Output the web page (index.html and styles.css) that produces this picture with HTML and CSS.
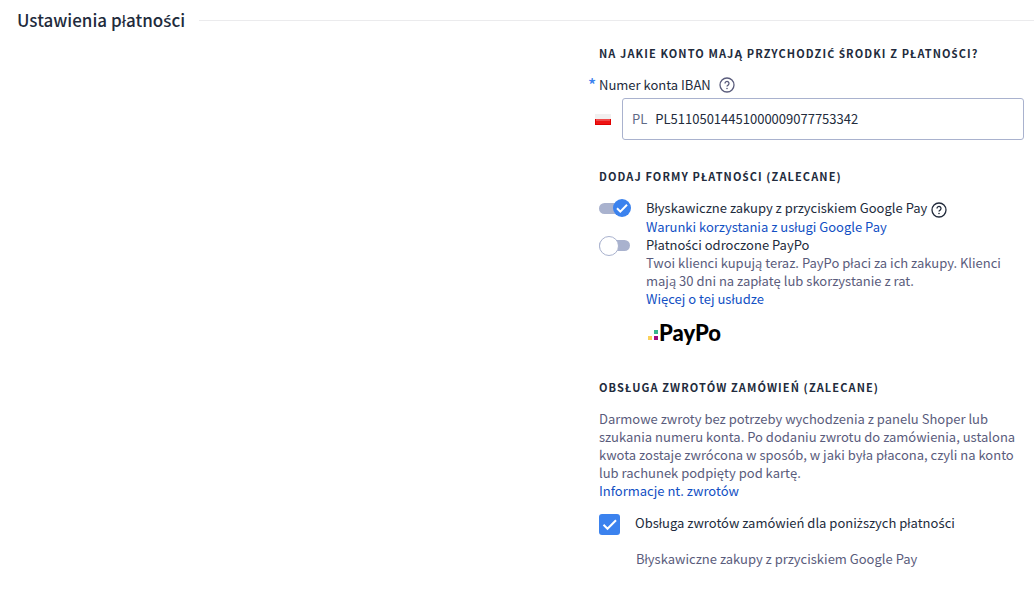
FILE: index.html
```html
<!DOCTYPE html>
<html lang="pl">
<head>
<meta charset="utf-8">
<title>Ustawienia płatności</title>
<link rel="stylesheet" href="styles.css">
</head>
<body>
<header class="section-head">
  <h1 class="section-title">Ustawienia płatno<span class="accent">ś</span>ci</h1>
  <div class="section-rule"></div>
</header>
<main class="settings">
  <form class="panel">
    <section class="group group-account">
      <h2 class="group-title">Na jakie konto mają przychodzi<span class="accent">ć</span> <span class="accent">ś</span>rodki z płatno<span class="accent">ś</span>ci?</h2>
      <div class="field-label">
        <span class="required">*</span>
        <label for="iban">Numer konta IBAN</label>
        <button class="help" type="button" aria-label="Pomoc">
          <svg class="help-icon" viewBox="0 0 16 16"><circle cx="8" cy="8" r="7"/><path d="M6 6.500a2 2 0 1 1 3.100 1.600C8.300 8.600 8 8.900 8 9.600"/><circle class="dot" cx="8" cy="11.500" r=".8"/></svg>
        </button>
      </div>
      <div class="field">
        <svg class="flag" viewBox="0 0 16 11"><rect width="16" height="5" fill="#f1f0f0"/><rect y="5" width="16" height="6" fill="#e00000"/><rect x="1" y="5" width="14" height="2" fill="#f04a4a"/><rect x="1" y="7" width="14" height="3" fill="#ee1414"/></svg>
        <div class="input-box">
          <span class="prefix">PL</span>
          <input class="input" id="iban" type="text" value="PL51105014451000009077753342">
        </div>
      </div>
    </section>
    <section class="group group-methods">
      <h2 class="group-title">Dodaj formy płatno<span class="accent">ś</span>ci (zalecane)</h2>
      <div class="method">
        <input class="toggle" id="gpay" type="checkbox" checked>
        <div class="method-text">
          <div class="method-name">
            <label for="gpay">Błyskawiczne zakupy z przyciskiem Google Pay</label>
            <button class="help help-dark" type="button" aria-label="Pomoc">
              <svg class="help-icon" viewBox="0 0 16 16"><circle cx="8" cy="8" r="7"/><path d="M6 6.500a2 2 0 1 1 3.100 1.600C8.300 8.600 8 8.900 8 9.600"/><circle class="dot" cx="8" cy="11.500" r=".8"/></svg>
            </button>
          </div>
          <a class="link" href="#">Warunki korzystania z usługi Google Pay</a>
        </div>
      </div>
      <div class="method">
        <input class="toggle" id="paypo" type="checkbox">
        <div class="method-text">
          <label for="paypo">Płatno<span class="accent">ś</span>ci odroczone PayPo</label>
          <p class="muted">Twoi klienci kupują teraz. PayPo płaci za ich zakupy. Klienci mają 30 dni na zapłatę lub skorzystanie z rat.</p>
          <a class="link" href="#">Więcej o tej usłudze</a>
          <div class="paypo">
            <svg class="paypo-mark" viewBox="0 0 10 10"><rect y="6" width="4" height="4" fill="#fbd15b"/><rect x="6" width="4" height="4" fill="#35b58c"/><rect x="6" y="6" width="4" height="4" fill="#a30b80"/></svg>
            <span class="paypo-name">PayPo</span>
          </div>
        </div>
      </div>
    </section>
    <section class="group">
      <h2 class="group-title">Obsługa zwrotów zamówień (zalecane)</h2>
      <p class="muted">Darmowe zwroty bez potrzeby wychodzenia z panelu Shoper lub szukania numeru konta. Po dodaniu zwrotu do zamówienia, ustalona kwota zostaje zwrócona w sposób, w jaki była płacona, czyli na konto lub rachunek podpięty pod kartę.</p>
      <a class="link" href="#">Informacje nt. zwrotów</a>
      <div class="check-row">
        <input class="check" id="returns" type="checkbox" checked>
        <label for="returns">Obsługa zwrotów zamówień dla poni<span class="accent">ż</span>szych płatno<span class="accent">ś</span>ci</label>
      </div>
      <p class="muted sub-item">Błyskawiczne zakupy z przyciskiem Google Pay</p>
    </section>
  </form>
</main>
</body>
</html>
```

FILE: styles.css
```css
* { box-sizing: border-box; }

body {
  margin: 0;
  background: #fff;
  color: #222b3c;
  font-family: "Noto Sans CJK SC", "Open Sans", sans-serif;
  font-size: 13px;
  line-height: 18px;
}

h1, h2, p { margin: 0; }

.accent {
  font-family: "Noto Sans", sans-serif;
  line-height: 1;
}

.section-head {
  display: flex;
  align-items: center;
  gap: 14px;
  padding: 8px 0 8px 17px;
}

.section-title {
  font-size: 17px;
  line-height: 24px;
  font-weight: 500;
}

.section-rule {
  flex: 1;
  height: 1px;
  background: #ebebed;
}

.settings {
  display: grid;
  grid-template-columns: 588fr 436fr;
  padding: 4px 10px 20px 0;
}

.panel { grid-column: 2; }

.group { padding-left: 11px; }
.group-account { padding-bottom: 27px; }
.group-methods { padding-bottom: 33px; }

.group-title {
  margin-bottom: 14px;
  font-size: 11px;
  line-height: 18px;
  font-weight: 700;
  letter-spacing: 0.1em;
  text-transform: uppercase;
}

.field-label {
  display: flex;
  align-items: center;
  margin-left: -11px;
}

.required {
  width: 11px;
  color: #3b82ee;
  font-size: 17px;
  font-weight: 500;
}

.help {
  width: 16px;
  height: 16px;
  margin-left: 8px;
  padding: 0;
  border: 0;
  background: none;
  color: #5a5c7c;
}

.help-dark {
  margin: 3px 0 0 4px;
  color: #222b3c;
}

.help-icon {
  display: block;
  width: 16px;
  height: 16px;
  fill: none;
  stroke: currentColor;
  stroke-width: 1.3;
}

.help-icon .dot {
  fill: currentColor;
  stroke: none;
}

.field {
  display: flex;
  align-items: center;
  gap: 11px;
  margin: 4px 0 0 -4px;
}

.flag {
  width: 16px;
  height: 11px;
}

.input-box {
  display: flex;
  flex: 1;
  align-items: center;
  gap: 8px;
  height: 42px;
  padding: 0 9px;
  border: 1px solid #a9b2ce;
  border-radius: 3px;
}

.prefix { color: #5f6a86; }

.input {
  flex: 1;
  min-width: 0;
  padding: 0;
  border: 0;
  outline: 0;
  background: none;
  color: inherit;
  font: inherit;
}

.method {
  display: flex;
  gap: 15px;
}

.method-text { flex: 1; }

.method-name {
  display: flex;
  height: 19px;
}

.toggle {
  position: relative;
  flex: none;
  width: 32px;
  height: 18px;
  margin: 0;
  appearance: none;
}

.toggle::before {
  content: "";
  position: absolute;
  inset: 4px 1px 3px 0;
  border-radius: 6px;
  background: #a9b2ce;
}

.toggle::after {
  content: "";
  position: absolute;
  top: 0;
  left: 0;
  width: 18px;
  height: 18px;
  border: 1px solid #a9b2ce;
  border-radius: 50%;
  background: #fff;
}

.toggle:checked::after {
  left: 14px;
  border: 0;
  background: #3b82ee url("data:image/svg+xml,%3Csvg xmlns='http://www.w3.org/2000/svg' viewBox='0 0 18 18'%3E%3Cpath d='M4 9.300l3.300 3.300L14 5.800' fill='none' stroke='white' stroke-width='2'/%3E%3C/svg%3E");
}

.muted { color: #5a5c7c; }

.link {
  color: #1250c4;
  text-decoration: none;
}

.paypo {
  display: flex;
  align-items: center;
  gap: 1px;
  padding: 13px 0 0 2px;
}

.paypo-mark {
  width: 10px;
  height: 10px;
  margin-top: 4px;
}

.paypo-name {
  color: #000;
  font-family: Lato, sans-serif;
  font-size: 22px;
  line-height: 24px;
  font-weight: 900;
}

.check-row {
  display: flex;
  align-items: flex-start;
  gap: 15px;
  padding-top: 14px;
}

.check {
  flex: none;
  width: 21px;
  height: 21px;
  margin: 0;
  appearance: none;
  border: 1px solid #a9b2ce;
  border-radius: 3px;
}

.check:checked {
  border: 0;
  background: #3b82ee url("data:image/svg+xml,%3Csvg xmlns='http://www.w3.org/2000/svg' viewBox='0 0 21 21'%3E%3Cpath d='M4.500 10.800l4 4L17 6.300' fill='none' stroke='white' stroke-width='2'/%3E%3C/svg%3E");
}

.sub-item { padding: 15px 0 0 37px; }
```
